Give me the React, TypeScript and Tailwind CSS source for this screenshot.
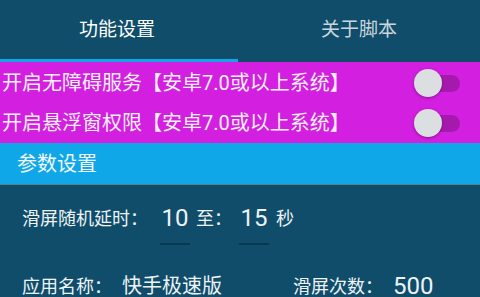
const Toggle = () => (
  <div className="relative w-[48px] h-[30px] flex items-center">
    <div className="absolute left-[14px] w-[32px] h-[17px] rounded-full bg-[#a51aad]" />
    <div className="absolute left-0 w-[28px] h-[28px] rounded-full bg-[#dcdfe2] shadow-[0_1px_3px_rgba(0,0,0,0.35)]" />
  </div>
);

const SwitchRow = ({ label }: { label: string }) => (
  <div className="h-[40px] shrink-0 flex items-center justify-between pl-[2px] pr-[18px]">
    <span className="text-[20px] leading-none text-[#f5f0f7]">{label}</span>
    <Toggle />
  </div>
);

export default function App() {
  return (
    <div
      className="w-[480px] h-[297px] overflow-hidden bg-[#0f4d6a] flex flex-col"
      style={{ fontFamily: "Roboto, 'Noto Sans CJK SC', sans-serif" }}
    >
      <div className="h-[62px] shrink-0 flex">
        <div className="w-[238px] flex flex-col">
          <div className="flex-1 flex items-center justify-center pr-[4px] pt-[1px] text-[19px] text-white">
            功能设置
          </div>
          <div className="h-[3px] bg-[#11a6e6]" />
        </div>
        <div className="flex-1 flex items-center justify-center pb-[2px] text-[19px] text-[#c9d6dd]">
          关于脚本
        </div>
      </div>

      <div className="shrink-0 bg-[#d31fdf] pt-[1px]">
        <SwitchRow label="开启无障碍服务【安卓7.0或以上系统】" />
        <SwitchRow label="开启悬浮窗权限【安卓7.0或以上系统】" />
      </div>

      <div className="h-[42px] shrink-0 bg-[#10a7e8] border-b border-[#5c7f90] flex items-center pl-[17px] text-[20px] text-[#f2f8fc]">
        参数设置
      </div>

      <div className="shrink-0 flex flex-col pl-[22px] text-[18px] text-[#eef3f6]">
        <div className="h-[62px] shrink-0 pt-[14px] flex items-start">
          <span className="mt-[6px]">滑屏随机延时：</span>
          <div className="ml-[12px] w-[30px] h-[46px] border-b-2 border-[#0b3850] text-center text-[24px] leading-[38px]">10</div>
          <span className="ml-[6px] mt-[6px]">至：</span>
          <div className="ml-[7px] w-[30px] h-[46px] border-b-2 border-[#0b3850] text-center text-[24px] leading-[38px]">15</div>
          <span className="ml-[7px] mt-[6px]">秒</span>
        </div>
        <div className="h-[60px] shrink-0 pt-[20px] flex items-start">
          <span className="mt-[6px]">应用名称：</span>
          <div className="ml-[10px] w-[124px] h-[48px] border-b-2 border-[#0b3850] text-[20px] leading-[38px]">快手极速版</div>
          <span className="ml-[47px] mt-[6px]">滑屏次数：</span>
          <span className="ml-[10px] mt-[6px] text-[24px] leading-[26px]">500</span>
        </div>
      </div>
    </div>
  );
}
